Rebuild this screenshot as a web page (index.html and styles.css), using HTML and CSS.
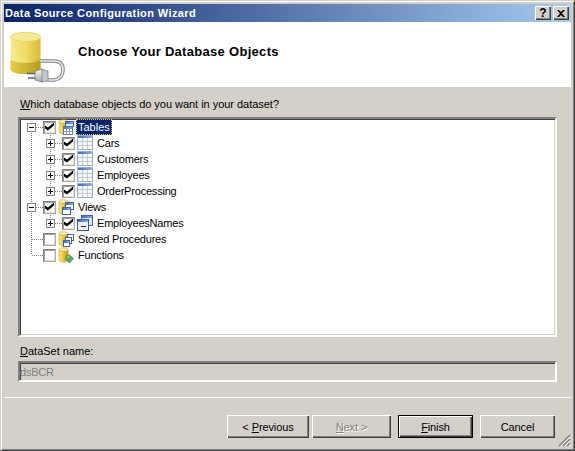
FILE: index.html
```html
<!DOCTYPE html>
<html lang="en">
<head>
  <meta charset="UTF-8" />
  <title>Data Source Configuration Wizard</title>
  <link rel="stylesheet" href="styles.css">
</head>
<body>
  <svg class="defs" width="0" height="0">
    <defs>
      <linearGradient id="gold" x1="0" x2="1" y1="0" y2="0">
        <stop offset="0" stop-color="#ffe98a"/>
        <stop offset="0.45" stop-color="#f4c830"/>
        <stop offset="1" stop-color="#c48a10"/>
      </linearGradient>
      <linearGradient id="bar" x1="0" x2="1" y1="0" y2="0">
        <stop offset="0" stop-color="#3f68c4"/>
        <stop offset="1" stop-color="#8fb0e8"/>
      </linearGradient>
      <symbol id="db" viewBox="0 0 16 16">
        <path d="M1 2.5v10.5c0 1 1.800 2 4.500 2s4.500-1 4.500-2V2.500z" fill="url(#gold)" stroke="#c8a040" stroke-width="0.6"/>
        <ellipse cx="5.500" cy="2.500" rx="4.500" ry="1.800" fill="#ffeea8" stroke="#c8a040" stroke-width="0.6"/>
      </symbol>
      <symbol id="grid" viewBox="0 0 16 16">
        <rect x="0.500" y="0.500" width="15" height="14" fill="#f6f6ee" stroke="#98acd0"/>
        <rect x="1" y="1" width="14" height="2" fill="url(#bar)"/>
        <path d="M5.500 3v11M10.500 3v11M1 6.500h14M1 10.500h14" stroke="#c0cadc"/>
      </symbol>
      <symbol id="table-db" viewBox="0 0 16 16">
        <use href="#db" width="16" height="16"/>
        <rect x="7.500" y="2.500" width="8" height="5" fill="#dce8f8" stroke="#3a62b0"/>
        <rect x="8" y="3" width="7" height="2" fill="url(#bar)"/>
        <rect x="5.500" y="7.500" width="9" height="8" fill="#fff" stroke="#5878b0"/>
        <rect x="6" y="8" width="8" height="2" fill="url(#bar)"/>
        <path d="M8.500 10v5M11.500 10v5M6 12.500h8" stroke="#8898b8"/>
      </symbol>
      <symbol id="view-db" viewBox="0 0 16 16">
        <use href="#db" width="16" height="16"/>
        <rect x="7.500" y="3.500" width="8" height="7" fill="#fff" stroke="#3a62b0"/>
        <rect x="8" y="4" width="7" height="2" fill="url(#bar)"/>
        <rect x="4.500" y="8.500" width="8" height="7" fill="#fff" stroke="#3a62b0"/>
        <rect x="5" y="9" width="7" height="2" fill="url(#bar)"/>
      </symbol>
      <symbol id="view" viewBox="0 0 16 16">
        <rect x="4.500" y="0.500" width="11" height="10" fill="#dce8f8" stroke="#3a62b0"/>
        <rect x="5" y="1" width="10" height="2" fill="url(#bar)"/>
        <rect x="0.500" y="4.500" width="11" height="11" fill="#e8eef6" stroke="#40608c"/>
        <rect x="1" y="5" width="10" height="2" fill="url(#bar)"/>
        <path d="M4 11.500h5" stroke="#222"/>
      </symbol>
      <symbol id="proc-db" viewBox="0 0 16 16">
        <use href="#db" width="16" height="16"/>
        <rect x="9.500" y="3.500" width="6" height="6" fill="#fff" stroke="#3a62b0"/>
        <rect x="7.500" y="6.500" width="6" height="6" fill="#fff" stroke="#3a62b0"/>
        <rect x="5.500" y="9.500" width="6" height="6" fill="#fff" stroke="#3a62b0"/>
        <rect x="6" y="10" width="5" height="2" fill="url(#bar)"/>
      </symbol>
      <symbol id="func-db" viewBox="0 0 16 16">
        <use href="#db" width="16" height="16"/>
        <path d="M11 7.500l4.500 4-4 4.500-4.500-4.500z" fill="#58a868" stroke="#3c8050" stroke-width="0.7"/>
        <path d="M8.500 11.500l3-3" stroke="#b8e8c0"/>
      </symbol>
    </defs>
  </svg>

  <div class="window">
    <div class="titlebar">
      <span class="title-text">Data Source Configuration Wizard</span>
      <span class="cap-btn">?</span>
      <span class="cap-btn">
        <svg width="8" height="7" viewBox="0 0 8 7"><path d="M0 0h2l2 2 2-2h2L5 3.500 8 7H6L4 5 2 7H0l3-3.500z" fill="#000"/></svg>
      </span>
    </div>

    <header class="banner">
      <svg class="banner-icon" width="58" height="52" viewBox="0 0 58 52">
        <defs>
          <linearGradient id="can" x1="0" x2="1" y1="0" y2="0">
            <stop offset="0" stop-color="#f8ec90"/>
            <stop offset="0.5" stop-color="#f0dc64"/>
            <stop offset="1" stop-color="#d8bc3c"/>
          </linearGradient>
          <linearGradient id="canlow" x1="0" x2="1" y1="0" y2="0">
            <stop offset="0" stop-color="#e8cc48"/>
            <stop offset="1" stop-color="#b89c20"/>
          </linearGradient>
          <linearGradient id="steel" x1="0" x2="0" y1="0" y2="1">
            <stop offset="0" stop-color="#f8f8f8"/>
            <stop offset="1" stop-color="#a4a8ac"/>
          </linearGradient>
        </defs>
        <path d="M0.500 6v32c0 3 6 5 15 5s15-2 15-5V6z" fill="url(#can)"/>
        <path d="M0.500 29v9c0 3 6 5 15 5s15-2 15-5v-9c-4 2-9 3-15 3s-11-1-15-3z" fill="url(#canlow)"/>
        <ellipse cx="15.500" cy="6" rx="15" ry="4.500" fill="#f6ec98" stroke="#e8d670"/>
        <path d="M30 30h14c7 0 9 4 9 9 0 6-3 9-9 10h-6" fill="none" stroke="#7c8286" stroke-width="3.600"/>
        <path d="M30 30h14c7 0 9 4 9 9 0 6-3 9-9 10h-6" fill="none" stroke="#ececec" stroke-width="1.600"/>
        <path d="M31 38l7 2v10l-7 1z" fill="#c4c8ca" stroke="#70767a" stroke-width="0.700"/>
        <path d="M25 40l7-2v13l-7-2z" fill="url(#steel)" stroke="#70767a" stroke-width="0.700"/>
        <path d="M17 42.500h8M18 47h7" stroke="#60666a" stroke-width="1.500"/>
      </svg>
      <h1 class="banner-title">Choose Your Database Objects</h1>
    </header>

    <main class="content">
      <label class="field-label prompt"><u>W</u>hich database objects do you want in your dataset?</label>

      <div class="tree sunken">
        <div class="row">
          <span class="col root first"><i class="exp minus"></i></span>
          <i class="check on"></i>
          <svg class="ico"><use href="#table-db"/></svg>
          <span class="name selected">Tables</span>
        </div>
        <div class="row">
          <span class="col trunk"></span>
          <span class="col stem"><i class="exp plus"></i></span>
          <i class="check on"></i>
          <svg class="ico"><use href="#grid"/></svg>
          <span class="name">Cars</span>
        </div>
        <div class="row">
          <span class="col trunk"></span>
          <span class="col stem"><i class="exp plus"></i></span>
          <i class="check on"></i>
          <svg class="ico"><use href="#grid"/></svg>
          <span class="name">Customers</span>
        </div>
        <div class="row">
          <span class="col trunk"></span>
          <span class="col stem"><i class="exp plus"></i></span>
          <i class="check on"></i>
          <svg class="ico"><use href="#grid"/></svg>
          <span class="name">Employees</span>
        </div>
        <div class="row">
          <span class="col trunk"></span>
          <span class="col stem last"><i class="exp plus"></i></span>
          <i class="check on"></i>
          <svg class="ico"><use href="#grid"/></svg>
          <span class="name">OrderProcessing</span>
        </div>
        <div class="row">
          <span class="col root"><i class="exp minus"></i></span>
          <i class="check on"></i>
          <svg class="ico"><use href="#view-db"/></svg>
          <span class="name">Views</span>
        </div>
        <div class="row">
          <span class="col trunk"></span>
          <span class="col stem last"><i class="exp plus"></i></span>
          <i class="check on"></i>
          <svg class="ico"><use href="#view"/></svg>
          <span class="name">EmployeesNames</span>
        </div>
        <div class="row">
          <span class="col root"></span>
          <i class="check"></i>
          <svg class="ico"><use href="#proc-db"/></svg>
          <span class="name">Stored Procedures</span>
        </div>
        <div class="row">
          <span class="col root last"></span>
          <i class="check"></i>
          <svg class="ico"><use href="#func-db"/></svg>
          <span class="name">Functions</span>
        </div>
      </div>

      <label class="field-label name-label"><u>D</u>ataSet name:</label>
      <div class="textbox sunken">dsBCR</div>
    </main>

    <footer class="actions">
      <button class="btn btn-prev">&lt; <u>P</u>revious</button>
      <button class="btn btn-next" disabled><u>N</u>ext &gt;</button>
      <button class="btn btn-finish default"><u>F</u>inish</button>
      <button class="btn btn-cancel">Cancel</button>
      <svg class="grip" width="13" height="13" viewBox="0 0 13 13">
        <path d="M12 1L1 12M12 5L5 12M12 9L9 12" stroke="#808080" stroke-width="1.500"/>
        <path d="M12 3L3 12M12 7L7 12M12 11L11 12" stroke="#fff"/>
      </svg>
    </footer>
  </div>
</body>
</html>
```

FILE: styles.css
```css
:root {
  --face: #d4d0c8;
  --shadow: #808080;
  --dark: #404040;
  --ui-font: "Liberation Sans", Arial, sans-serif;
}
* {
  box-sizing: border-box;
}
body {
  margin: 0;
  background: var(--face);
  color: #000;
  font-family: var(--ui-font);
  font-size: 11px;
}
.defs {
  display: block;
  height: 0;
}
.window {
  position: relative;
  width: 575px;
  height: 451px;
  padding: 3px;
  display: flex;
  flex-direction: column;
  background: var(--face);
  border: 1px solid;
  border-color: var(--face) var(--dark) var(--dark) var(--face);
  box-shadow: inset 1px 1px 0 #fff, inset -1px -1px 0 var(--shadow);
}

/* title bar */
.titlebar {
  height: 18px;
  flex: none;
  display: flex;
  align-items: center;
  gap: 2px;
  padding: 0 2px 0 1px;
  background: linear-gradient(90deg, #0a246a, #a6caf0);
}
.title-text {
  flex: 1;
  color: #fff;
  font-weight: bold;
  font-size: 11px;
  letter-spacing: 0.4px;
}
.cap-btn {
  width: 16px;
  height: 14px;
  display: flex;
  align-items: center;
  justify-content: center;
  background: var(--face);
  font-weight: bold;
  font-size: 12px;
  box-shadow: inset 1px 1px 0 #fff, inset -1px -1px 0 var(--dark), inset -2px -2px 0 var(--shadow);
}

/* white banner */
.banner {
  height: 65px;
  flex: none;
  display: flex;
  align-items: center;
  background: #fff;
}
.banner-icon {
  flex: none;
  margin: 4px 0 0 6px;
}
.banner-title {
  margin: 0 0 7px 10px;
  font-size: 13px;
  font-weight: bold;
  letter-spacing: 0.3px;
}

/* main part */
.content {
  flex: none;
  padding: 11px 14px 0;
}
.field-label {
  display: block;
  height: 13px;
  line-height: 13px;
  margin-left: 2px;
}
.prompt {
  letter-spacing: -0.03px;
}
.sunken {
  border: 2px solid;
  border-color: var(--shadow) #fff #fff var(--shadow);
  box-shadow: inset 1px 1px 0 var(--dark), inset -1px -1px 0 var(--face);
}
.tree {
  height: 220px;
  margin-top: 6px;
  padding: 0 0 0 2px;
  background: #fff;
}
.name-label {
  margin-top: 8px;
}
.textbox {
  height: 21px;
  margin-top: 3px;
  padding: 2px 0 0 0;
  color: var(--shadow);
  line-height: 14px;
  letter-spacing: -0.2px;
}

/* tree rows */
.row {
  height: 16px;
  display: flex;
  align-items: center;
}
.col {
  position: relative;
  flex: none;
  width: 19px;
  height: 16px;
  display: flex;
  align-items: center;
  justify-content: center;
}
.col::before {
  content: "";
  position: absolute;
  left: 9px;
  top: 0;
  bottom: 0;
  width: 1px;
  background: repeating-linear-gradient(#808080 0 1px, transparent 1px 2px);
}
.col.first::before {
  top: 8px;
}
.col.last::before {
  bottom: 8px;
}
.col.root::after,
.col.stem::after {
  content: "";
  position: absolute;
  left: 10px;
  right: -2px;
  top: 8px;
  height: 1px;
  background: repeating-linear-gradient(90deg, #808080 0 1px, transparent 1px 2px);
}
.exp {
  position: relative;
  z-index: 1;
  width: 9px;
  height: 9px;
  margin-top: 1px;
  border: 1px solid var(--shadow);
  background: #fff;
}
.exp::before {
  content: "";
  position: absolute;
  left: 1px;
  top: 3px;
  width: 5px;
  height: 1px;
  background: #000;
}
.exp.plus::after {
  content: "";
  position: absolute;
  left: 3px;
  top: 1px;
  width: 1px;
  height: 5px;
  background: #000;
}
.check {
  position: relative;
  flex: none;
  width: 13px;
  height: 13px;
  margin-left: 2px;
  border: 1px solid;
  border-color: var(--shadow) #b0aca4 #b0aca4 var(--shadow);
  box-shadow: inset 1px 1px 0 #a0a098, inset -1px -1px 0 #e0ded8;
  background: #fff;
}
.check.on::after {
  content: "";
  position: absolute;
  left: 1px;
  top: 1px;
  width: 9px;
  height: 8px;
  background: #000;
  clip-path: polygon(0 38%, 33% 62%, 100% 0, 100% 38%, 33% 100%, 0 75%);
}
.ico {
  flex: none;
  width: 16px;
  height: 16px;
  margin-left: 2px;
}
.name {
  margin-left: 2px;
  padding: 0 2px;
  height: 16px;
  line-height: 16px;
  white-space: nowrap;
  letter-spacing: -0.2px;
}
.name.selected {
  color: #fff;
  background: #0a246a;
  outline: 1px dotted #e8c060;
  outline-offset: -1px;
  letter-spacing: 0;
}

/* bottom buttons */
.actions {
  position: relative;
  flex: 1;
  margin-top: 15px;
  border-top: 1px solid #fff;
  padding: 17px 16px 0 0;
  display: flex;
  justify-content: flex-end;
  align-items: flex-start;
}
.btn {
  height: 23px;
  padding: 0;
  border: 0;
  background: var(--face);
  color: #000;
  font-family: var(--ui-font);
  font-size: 11px;
  letter-spacing: -0.1px;
  box-shadow: inset 1px 1px 0 #fff, inset -1px -1px 0 var(--dark), inset -2px -2px 0 var(--shadow);
}
.btn-prev {
  width: 82px;
}
.btn-next {
  width: 79px;
  margin-left: 3px;
  color: var(--shadow);
  text-shadow: 1px 1px 0 #fff;
}
.btn-finish {
  width: 75px;
  margin-left: 7px;
}
.btn-cancel {
  width: 75px;
  margin-left: 7px;
}
.btn.default {
  border: 1px solid #000;
}
.grip {
  position: absolute;
  right: 0;
  bottom: 0;
}
```
